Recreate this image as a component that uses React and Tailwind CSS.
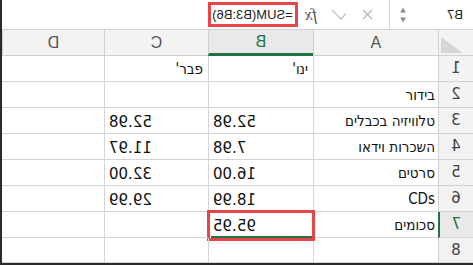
import React from "react";

const rows = [
  { n: 1, a: "", b: "ינו'", c: "פבר'", head: true },
  { n: 2, a: "בידור" },
  { n: 3, a: "טלוויזיה בכבלים", b: "52.98", c: "52.98" },
  { n: 4, a: "השכרות וידאו", b: "7.98", c: "11.97" },
  { n: 5, a: "סרטים", b: "16.00", c: "32.00" },
  { n: 6, a: "CDs", b: "18.99", c: "29.99" },
  { n: 7, a: "סכומים", b: "95.95", sel: true },
  { n: 8 },
];

const numFont = { fontFamily: '"DejaVu Sans", sans-serif' };
const txtFont = { fontFamily: '"Liberation Sans", Arial, sans-serif' };
const hebFont = { fontFamily: '"DejaVu Sans Condensed", "DejaVu Sans", sans-serif' };

function TextCell({ value, className = "", dir }) {
  return (
    <div
      className={`flex items-end justify-start pl-[3px] pb-[4px] border-r border-b border-[#d4d4d4] text-[15px] leading-none text-[#111] whitespace-nowrap overflow-hidden ${className}`}
      style={hebFont}
    >
      {value ? (
        <span dir={dir} className="inline-block -scale-x-100">
          {value}
        </span>
      ) : null}
    </div>
  );
}

function NumCell({ value, className = "", children }) {
  return (
    <div
      className={`relative flex items-end justify-end pr-[4px] pb-[3px] border-r border-b border-[#d4d4d4] text-[15px] leading-none text-[#111] whitespace-nowrap ${className}`}
      style={numFont}
    >
      {value}
      {children}
    </div>
  );
}

export default function App() {
  return (
    <div className="w-[473px] h-[265px] overflow-hidden bg-white -scale-x-100 border-r-2 border-b-2 border-[#2a2a2a] flex flex-col">
      {/* Formula bar */}
      <div className="flex items-center h-[30px] shrink-0 border-b border-[#cfcfcf]">
        <div className="flex items-center h-full w-[84px] border-r border-[#d6d6d6] pl-[10px] pr-[10px]">
          <span className="text-[13px] text-[#222]" style={txtFont}>B7</span>
          <div className="ml-auto flex flex-col gap-[4px] items-center">
            <svg width="6" height="6" viewBox="0 0 6 6"><path d="M3 0.5 L5.8 5.5 L0.2 5.5 Z" fill="#8a8a8a" /></svg>
            <svg width="6" height="6" viewBox="0 0 6 6"><path d="M0.2 0.5 L5.8 0.5 L3 5.5 Z" fill="#8a8a8a" /></svg>
          </div>
        </div>
        <svg className="ml-[16px]" width="11" height="11" viewBox="0 0 11 11">
          <path d="M1 1 L10 10 M10 1 L1 10" stroke="#b8b8b8" strokeWidth="1.4" fill="none" />
        </svg>
        <svg className="ml-[15px]" width="16" height="11" viewBox="0 0 16 11">
          <path d="M1 4.5 L6 10 L15 1" stroke="#c4c4c4" strokeWidth="1.4" fill="none" />
        </svg>
        <span
          className="ml-[14px] text-[17px] italic leading-none text-[#555]"
          style={{ fontFamily: '"Liberation Serif", "Times New Roman", serif' }}
        >
          fx
        </span>
        <div className="ml-[7px] h-[25px] w-[90px] border-[3px] border-[#e8454a] flex items-center pl-[2px]">
          <span className="text-[13px] text-[#222] leading-none" style={txtFont}>=SUM(B3:B6)</span>
        </div>
      </div>

      {/* Grid */}
      <div className="grid grid-cols-[35px_125px_105px_104px_1fr] grid-rows-[26px_26px_26px_26px_26px_26px_26px_26px_25px]">
        <div className="relative bg-[#f3f3f3] border-r border-b border-[#d0d0d0]">
          <svg className="absolute right-[2px] bottom-[2px]" width="22" height="16" viewBox="0 0 22 16">
            <path d="M22 0 L22 16 L0 16 Z" fill="#d6d6d6" />
          </svg>
        </div>
        {["A", "B", "C", "D"].map((c) => (
          <div
            key={c}
            className={`flex items-center justify-center text-[16px] leading-none border-r ${
              c === "B"
                ? "bg-[#e9e9e9] text-[#217346] border-b-[3px] border-b-[#217346] border-r-[#d0d0d0]"
                : "bg-[#f3f3f3] text-[#555] border-b border-[#d0d0d0]"
            }`}
            style={txtFont}
          >
            {c}
          </div>
        ))}

        {rows.map((r) => (
          <React.Fragment key={r.n}>
            <div
              className={`flex items-center justify-center text-[15px] leading-none border-b border-[#d4d4d4] ${
                r.sel
                  ? "bg-[#e9e9e9] text-[#217346] border-r-2 border-r-[#217346]"
                  : "bg-[#f3f3f3] text-[#444] border-r border-r-[#d0d0d0]"
              }`}
              style={numFont}
            >
              {r.n}
            </div>
            <TextCell value={r.a} />
            {r.head ? (
              <TextCell value={r.b} dir="rtl" className="pl-[5px] pb-[3px] text-[14px]" />
            ) : (
              <NumCell value={r.b}>
                {r.sel ? (
                  <>
                    <div className="absolute left-[-1px] top-[-1px] right-[-1px] bottom-[-1px] border-2 border-[#217346]" />
                    <div className="absolute right-[-3px] bottom-[-3px] w-[5px] h-[5px] bg-[#217346] border border-white" />
                    <div className="absolute left-[-2px] top-[-2px] right-[-2px] bottom-[-4px] border-[3px] border-[#e8454a]" />
                  </>
                ) : null}
              </NumCell>
            )}
            {r.head ? (
              <TextCell value={r.c} dir="rtl" className="pl-[5px] pb-[3px] text-[14px]" />
            ) : (
              <NumCell value={r.c} />
            )}
            <div className="border-b border-[#d4d4d4]" />
          </React.Fragment>
        ))}
      </div>
    </div>
  );
}
